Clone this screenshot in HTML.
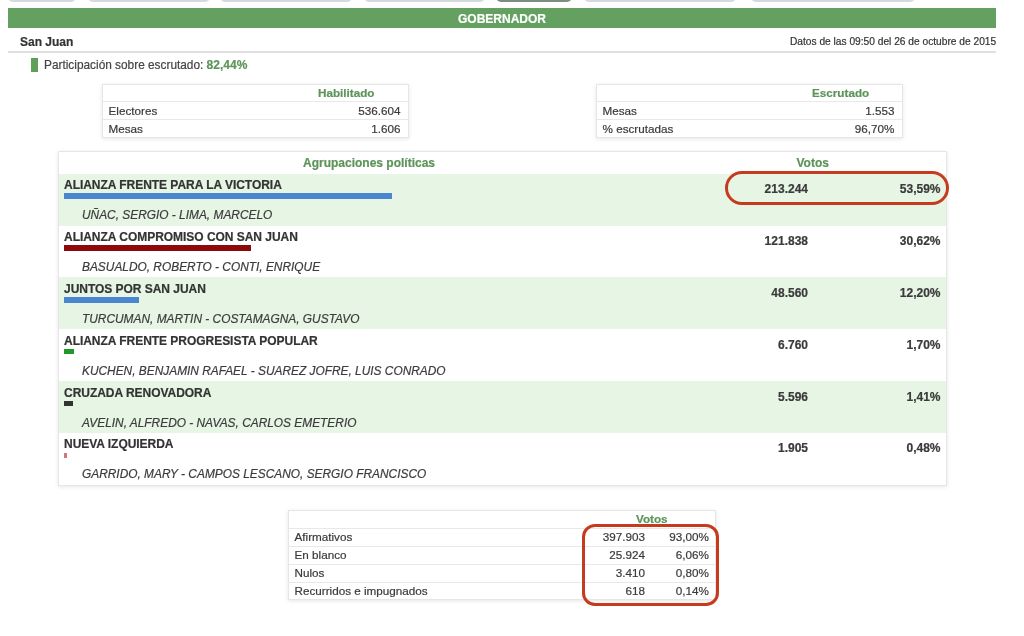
<!DOCTYPE html>
<html><head><meta charset="utf-8">
<style>
*{margin:0;padding:0;box-sizing:border-box}
html,body{width:1024px;height:636px;overflow:hidden;background:#fff}
body{font-family:"Liberation Sans",sans-serif;color:#3a3a3a;position:relative;-webkit-text-stroke:0.2px currentColor}
.abs{position:absolute}
.tab{position:absolute;top:-7px;height:9px;background:#d3d9dd;border-radius:0 0 5px 5px}
.gbar{position:absolute;left:8px;top:8px;width:988px;height:20px;background:#64a160;color:#fff;font-weight:bold;font-size:12px;line-height:22px;text-align:center;text-indent:0}
.t{position:absolute;white-space:nowrap;line-height:14px}
.box{position:absolute;border:1px solid #e6e6e6;box-shadow:0 1px 4px rgba(0,0,0,.10);background:#fff}
.hl{position:absolute;left:0;right:0;height:1px;background:#e8e8e8}
.g{color:#5c9459;font-weight:bold}
.sm{font-size:11.7px}
.mrow{position:absolute;left:0;right:0;height:51.75px}
.pname{font-size:12px;font-weight:bold;color:#333;letter-spacing:-0.035px}
.cand{font-size:11.9px;font-style:italic;color:#3c3c3c}
.pbar{position:absolute;height:5px}
.num{font-size:12px;font-weight:bold;color:#3a3a3a;text-align:right}
.oval{position:absolute;border:3px solid #c63b1d;}
</style></head><body><div id="w" style="position:absolute;left:0;top:0;width:1024px;height:636px;will-change:transform">
<div class="tab" style="left:8px;width:68px"></div>
<div class="tab" style="left:88px;width:122px"></div>
<div class="tab" style="left:220px;width:132px"></div>
<div class="tab" style="left:364px;width:121px"></div>
<div class="tab" style="left:496px;width:76px;background:#7d8c84"></div>
<div class="tab" style="left:584px;width:152px"></div>
<div class="tab" style="left:751px;width:164px"></div>

<div class="gbar">GOBERNADOR</div>
<div class="t" style="left:20px;top:35px;font-size:12px;font-weight:bold;color:#333">San Juan</div>
<div class="t" style="left:790px;top:35px;font-size:10.2px;color:#333">Datos de las 09:50 del 26 de octubre de 2015</div>
<div class="abs" style="left:8px;top:51px;width:988px;height:1.5px;background:#e0e0e0"></div>
<div class="abs" style="left:31px;top:58px;width:7px;height:14px;background:#5f9f5a"></div>
<div class="t" style="left:44px;top:58px;font-size:11.85px;color:#444">Participación sobre escrutado: <span class="g" style="font-size:12px">82,44%</span></div>

<!-- Habilitado -->
<div class="box" style="left:102px;top:84px;width:306.5px;height:53.5px">
 <div class="hl" style="top:16px"></div>
 <div class="hl" style="top:33.5px"></div>
 <div class="t g sm" style="left:215px;top:1px">Habilitado</div>
 <div class="t sm" style="left:5.5px;top:19px">Electores</div>
 <div class="t sm" style="right:7px;top:19px">536.604</div>
 <div class="t sm" style="left:5.5px;top:36.5px">Mesas</div>
 <div class="t sm" style="right:7px;top:36.5px">1.606</div>
</div>
<!-- Escrutado -->
<div class="box" style="left:596px;top:84px;width:306.5px;height:53.5px">
 <div class="hl" style="top:16px"></div>
 <div class="hl" style="top:33.5px"></div>
 <div class="t g sm" style="left:215px;top:1px">Escrutado</div>
 <div class="t sm" style="left:5.5px;top:19px">Mesas</div>
 <div class="t sm" style="right:7px;top:19px">1.553</div>
 <div class="t sm" style="left:5.5px;top:36.5px">% escrutadas</div>
 <div class="t sm" style="right:7px;top:36.5px">96,70%</div>
</div>

<!-- main -->
<div class="box" style="left:58px;top:151px;width:889px;height:334.5px;overflow:hidden">
 <div class="t g" style="left:244px;top:4.3px;font-size:12px">Agrupaciones políticas</div>
 <div class="t g" style="left:737.5px;top:4.3px;font-size:12px">Votos</div>
 <div class="mrow" style="top:21.90px;background:#e6f5e4"></div>
<div class="t pname" style="left:5px;top:25.90px">ALIANZA FRENTE PARA LA VICTORIA</div>
<div class="pbar" style="left:5px;top:41.40px;height:5.4px;width:328.0px;background:#4a87d0"></div>
<div class="t cand" style="left:23px;top:55.90px">UÑAC, SERGIO - LIMA, MARCELO</div>
<div class="t num" style="right:138px;top:29.90px">213.244</div>
<div class="t num" style="right:5.5px;top:29.90px">53,59%</div><div class="mrow" style="top:73.65px;background:#ffffff"></div>
<div class="t pname" style="left:5px;top:77.80px">ALIANZA COMPROMISO CON SAN JUAN</div>
<div class="pbar" style="left:5px;top:93.30px;height:5.4px;width:187.4px;background:#8e0a0a"></div>
<div class="t cand" style="left:23px;top:107.80px">BASUALDO, ROBERTO - CONTI, ENRIQUE</div>
<div class="t num" style="right:138px;top:81.80px">121.838</div>
<div class="t num" style="right:5.5px;top:81.80px">30,62%</div><div class="mrow" style="top:125.40px;background:#e6f5e4"></div>
<div class="t pname" style="left:5px;top:129.70px">JUNTOS POR SAN JUAN</div>
<div class="pbar" style="left:5px;top:145.20px;height:5.4px;width:74.7px;background:#4a87d0"></div>
<div class="t cand" style="left:23px;top:159.70px">TURCUMAN, MARTIN - COSTAMAGNA, GUSTAVO</div>
<div class="t num" style="right:138px;top:133.70px">48.560</div>
<div class="t num" style="right:5.5px;top:133.70px">12,20%</div><div class="mrow" style="top:177.15px;background:#ffffff"></div>
<div class="t pname" style="left:5px;top:181.60px">ALIANZA FRENTE PROGRESISTA POPULAR</div>
<div class="pbar" style="left:5px;top:197.10px;height:5.4px;width:10.4px;background:#1f9a2a"></div>
<div class="t cand" style="left:23px;top:211.60px">KUCHEN, BENJAMIN RAFAEL - SUAREZ JOFRE, LUIS CONRADO</div>
<div class="t num" style="right:138px;top:185.60px">6.760</div>
<div class="t num" style="right:5.5px;top:185.60px">1,70%</div><div class="mrow" style="top:228.90px;background:#e6f5e4"></div>
<div class="t pname" style="left:5px;top:233.50px">CRUZADA RENOVADORA</div>
<div class="pbar" style="left:5px;top:249.00px;height:5.4px;width:8.6px;background:#333333"></div>
<div class="t cand" style="left:23px;top:263.50px">AVELIN, ALFREDO - NAVAS, CARLOS EMETERIO</div>
<div class="t num" style="right:138px;top:237.50px">5.596</div>
<div class="t num" style="right:5.5px;top:237.50px">1,41%</div><div class="mrow" style="top:280.65px;background:#ffffff"></div>
<div class="t pname" style="left:5px;top:285.40px">NUEVA IZQUIERDA</div>
<div class="pbar" style="left:5px;top:300.90px;height:5.4px;width:3.0px;background:#d47676"></div>
<div class="t cand" style="left:23px;top:315.40px">GARRIDO, MARY - CAMPOS LESCANO, SERGIO FRANCISCO</div>
<div class="t num" style="right:138px;top:289.40px">1.905</div>
<div class="t num" style="right:5.5px;top:289.40px">0,48%</div>
</div>
<div class="oval" style="left:724.5px;top:170.9px;width:224.2px;height:33.9px;border-radius:17px"></div>

<!-- bottom -->
<div class="box" style="left:288px;top:510px;width:428px;height:90px">
 <div class="hl" style="top:17px"></div>
 <div class="hl" style="top:35px"></div>
 <div class="hl" style="top:53px"></div>
 <div class="hl" style="top:71px"></div>
 <div class="t g sm" style="left:347px;top:0.5px">Votos</div>
 <div class="t sm" style="left:5.5px;top:18.5px">Afirmativos</div>
 <div class="t sm" style="left:5.5px;top:36.5px">En blanco</div>
 <div class="t sm" style="left:5.5px;top:54.5px">Nulos</div>
 <div class="t sm" style="left:5.5px;top:72.5px">Recurridos e impugnados</div>
 <div class="t sm" style="right:70px;top:18.5px">397.903</div>
 <div class="t sm" style="right:70px;top:36.5px">25.924</div>
 <div class="t sm" style="right:70px;top:54.5px">3.410</div>
 <div class="t sm" style="right:70px;top:72.5px">618</div>
 <div class="t sm" style="right:6px;top:18.5px">93,00%</div>
 <div class="t sm" style="right:6px;top:36.5px">6,06%</div>
 <div class="t sm" style="right:6px;top:54.5px">0,80%</div>
 <div class="t sm" style="right:6px;top:72.5px">0,14%</div>
</div>
<div class="oval" style="left:581.5px;top:524px;width:137px;height:81.5px;border-radius:13px"></div>
</div></body></html>
